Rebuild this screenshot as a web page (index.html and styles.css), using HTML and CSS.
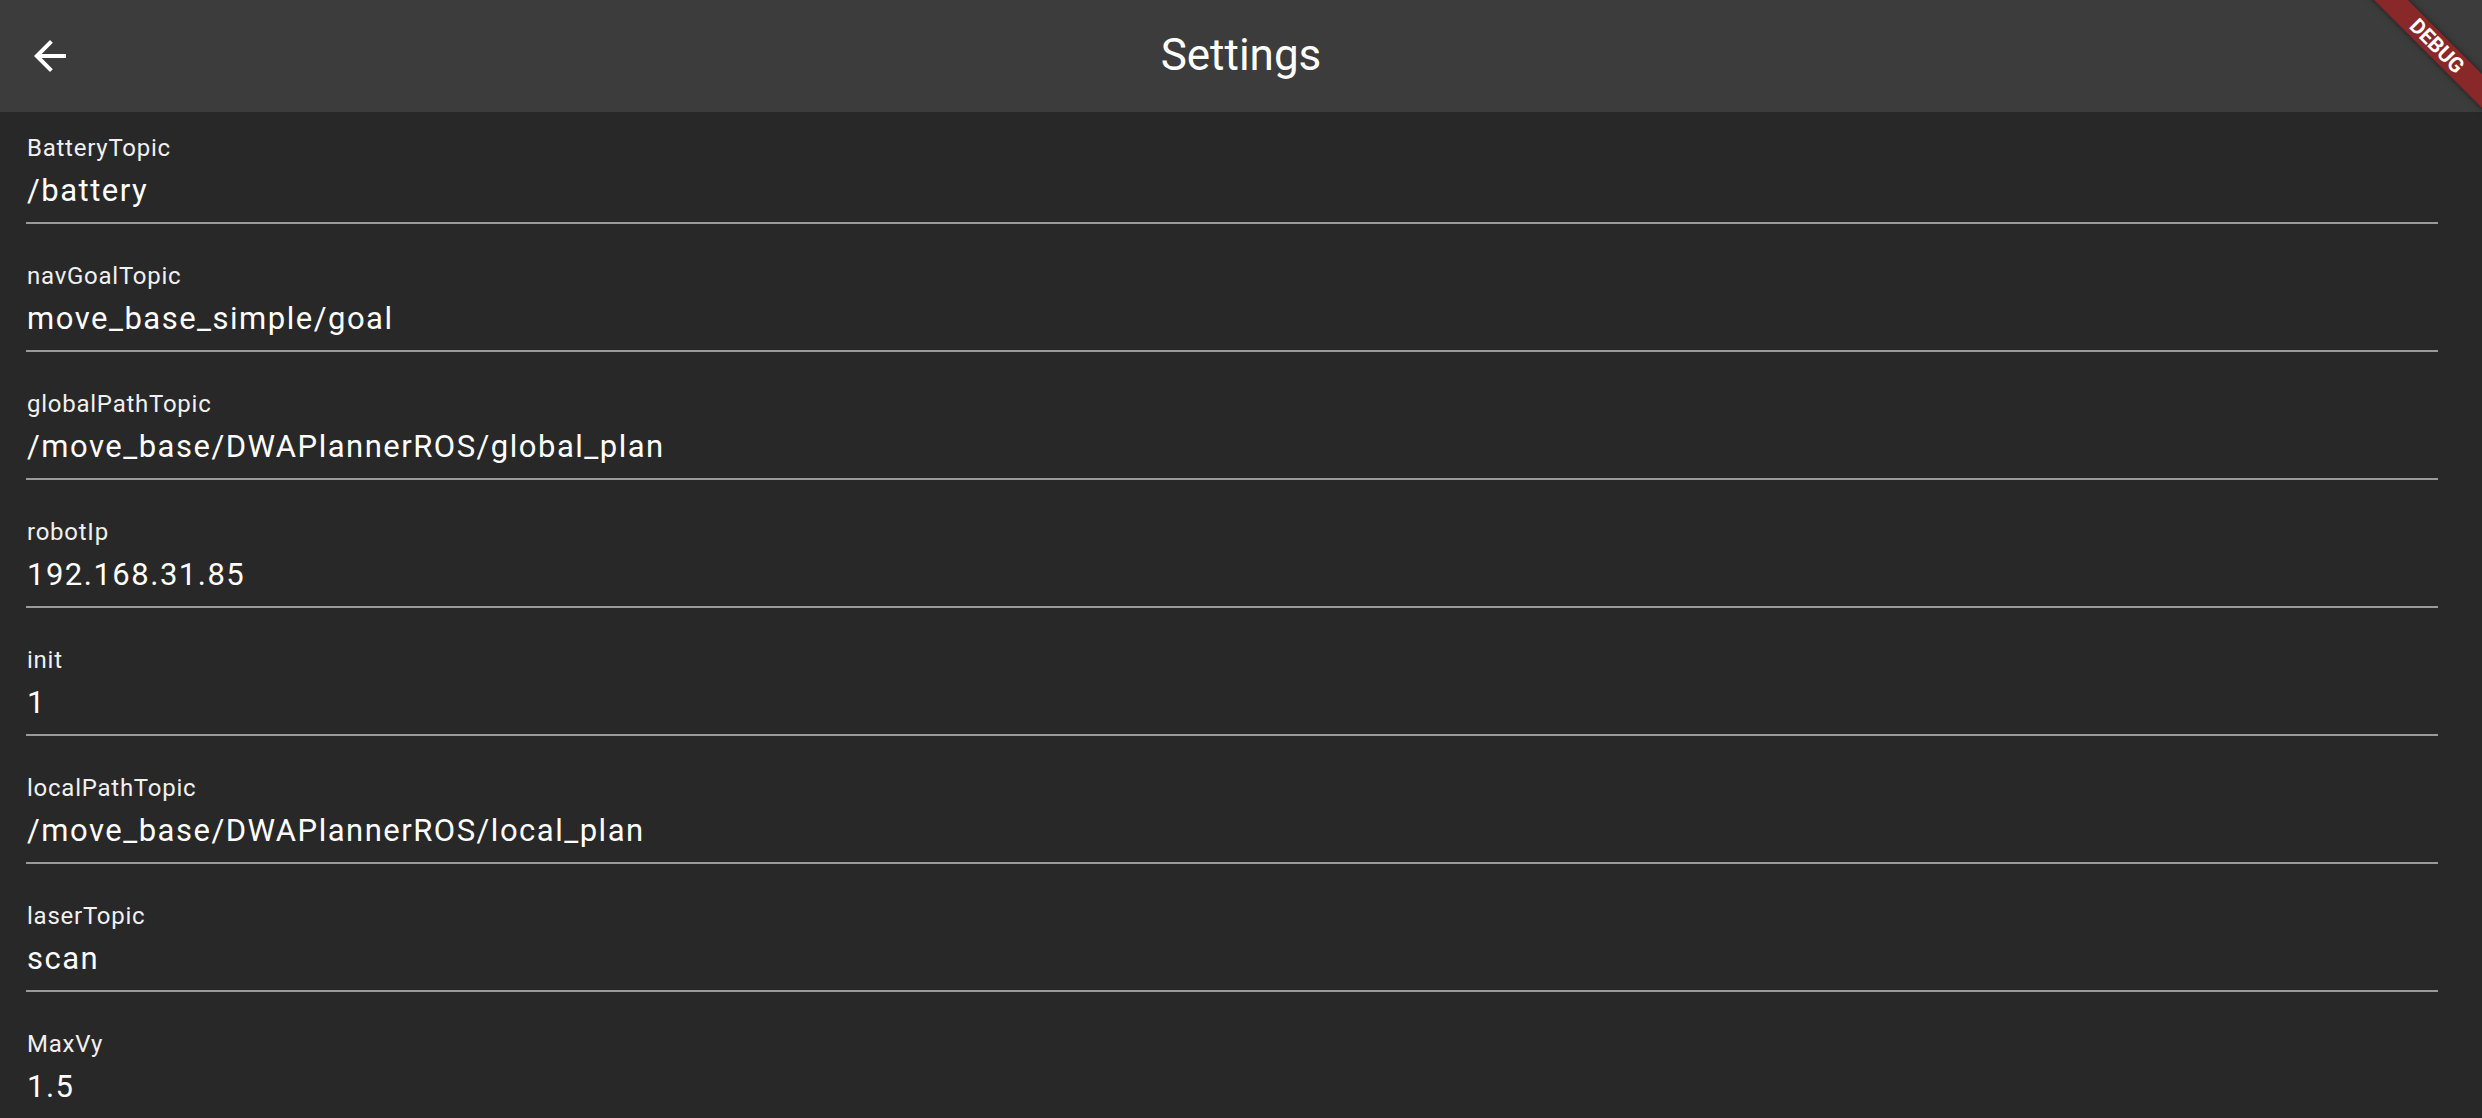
FILE: index.html
```html
<!DOCTYPE html>
<html lang="en">
<head>
<meta charset="utf-8">
<title>Settings</title>
<link rel="stylesheet" href="styles.css">
</head>
<body>
<div class="app">
  <header class="appbar">
    <div class="lead">
      <svg class="back" viewBox="0 0 24 24" width="48" height="48" aria-hidden="true">
        <path d="M20 11H7.83l5.59-5.59L12 4l-8 8 8 8 1.41-1.41L7.83 13H20v-2z" fill="#ffffff"/>
      </svg>
    </div>
    <h1 class="title">Settings</h1>
    <div class="trail"></div>
  </header>
  <main class="list">
    <div class="field"><div class="label">BatteryTopic</div><div class="value">/battery</div></div>
    <div class="field"><div class="label">navGoalTopic</div><div class="value">move_base_simple/goal</div></div>
    <div class="field"><div class="label">globalPathTopic</div><div class="value">/move_base/DWAPlannerROS/global_plan</div></div>
    <div class="field"><div class="label">robotIp</div><div class="value">192.168.31.85</div></div>
    <div class="field"><div class="label">init</div><div class="value">1</div></div>
    <div class="field"><div class="label">localPathTopic</div><div class="value">/move_base/DWAPlannerROS/local_plan</div></div>
    <div class="field"><div class="label">laserTopic</div><div class="value">scan</div></div>
    <div class="field"><div class="label">MaxVy</div><div class="value">1.5</div></div>
  </main>
  <div class="debug-banner">DEBUG</div>
</div>
</body>
</html>
```
FILE: styles.css
```css
html, body {
  margin: 0;
  padding: 0;
  background: #282828;
}
body {
  width: 2482px;
  height: 1118px;
  overflow: hidden;
  font-family: Roboto, "Noto Sans", "Liberation Sans", sans-serif;
}
.app {
  position: relative;
  width: 2482px;
  height: 1118px;
  overflow: hidden;
}
.appbar {
  height: 112px;
  background: #3c3c3c;
  display: grid;
  grid-template-columns: 1fr auto 1fr;
  align-items: center;
}
.lead {
  display: flex;
  align-items: center;
  padding-left: 26px;
}
.back {
  display: block;
}
.title {
  margin: 0;
  font-size: 44px;
  font-weight: 400;
  line-height: 50px;
  color: #ffffff;
  padding-bottom: 2px;
}
.list {
  display: flex;
  flex-direction: column;
  gap: 16px;
  padding: 0 44px 0 26px;
}
.field {
  padding: 22px 0 14px;
  border-bottom: 2px solid #9a9a9a;
}
.label {
  font-size: 24px;
  line-height: 28px;
  letter-spacing: 0.75px;
  color: #f0f0f0;
  padding-left: 1px;
}
.value {
  margin-top: 12px;
  font-size: 31px;
  line-height: 34px;
  color: #ffffff;
  letter-spacing: 1.5px;
  padding-left: 1px;
}
.debug-banner {
  position: absolute;
  left: 2337px;
  top: 34px;
  width: 200px;
  height: 24px;
  transform: rotate(45deg);
  background: rgba(183, 28, 28, 0.627);
  box-shadow: 0 0 6px rgba(0, 0, 0, 0.5);
  color: #ffffff;
  font-size: 21px;
  font-weight: 700;
  line-height: 24px;
  text-align: center;
}
```
